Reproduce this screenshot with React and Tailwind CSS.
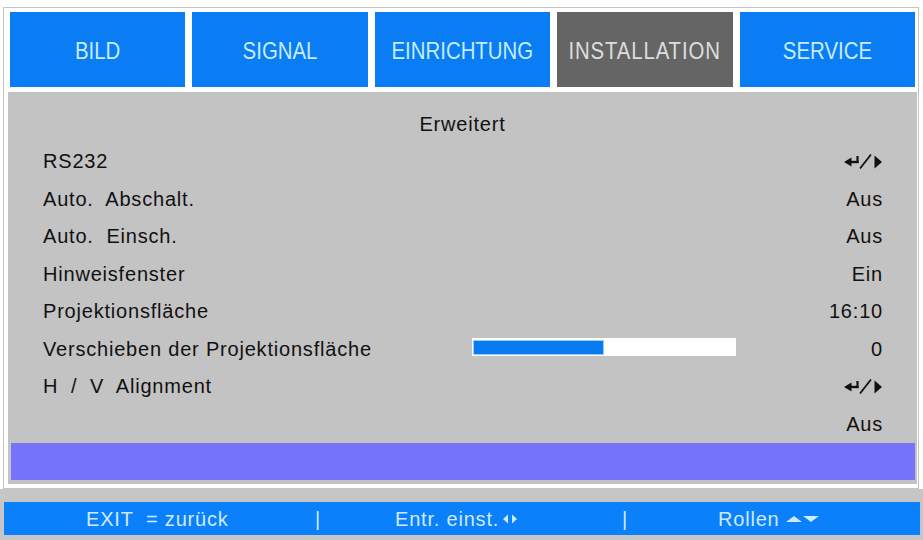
import React from "react";

const FONT = { fontFamily: '"Liberation Sans", Arial, sans-serif' };

function EnterIcon() {
  return (
    <svg width="39" height="16" viewBox="0 0 39 16" className="block">
      <polygon points="0,9 7.5,4.5 7.5,13.5" fill="#111" />
      <line x1="6" y1="9" x2="14.5" y2="9" stroke="#111" strokeWidth="2.4" />
      <line x1="13.5" y1="10" x2="13.5" y2="3" stroke="#111" strokeWidth="2.2" />
      <line x1="16" y1="15.5" x2="27" y2="1.5" stroke="#111" strokeWidth="1.8" />
      <polygon points="30.5,2.5 38,9 30.5,15.5" fill="#111" />
    </svg>
  );
}

const tabs = [
  { t: "BILD", cls: "" },
  { t: "SIGNAL", cls: "" },
  { t: "EINRICHTUNG", cls: "" },
  { t: "INSTALLATION", cls: "tracking-[1px]" },
  { t: "SERVICE", cls: "" },
];

const rows = [
  { label: "RS232", icon: true },
  { label: "Auto.  Abschalt.", value: "Aus" },
  { label: "Auto.  Einsch.", value: "Aus" },
  { label: "Hinweisfenster", value: "Ein" },
  { label: "Projektionsfläche", value: "16:10" },
  { label: "Verschieben der Projektionsfläche", slider: true, value: "0" },
  { label: "H  /  V  Alignment", icon: true },
  { label: "", value: "Aus" },
];

export default function App() {
  return (
    <div className="w-[923px] h-[540px] bg-white overflow-hidden flex flex-col" style={FONT}>
      {/* Frame */}
      <div className="ml-[3px] mt-[7px] w-[916px] h-[482px] border border-[#c4c4c4] bg-white flex flex-col">
        {/* Tabs */}
        <div className="grid grid-cols-5 gap-[7px] pl-[6px] pr-[3px] pt-[4px] h-[79px]">
          {tabs.map(({ t, cls }) => {
            const active = t === "INSTALLATION";
            return (
              <div
                key={t}
                className={
                  "h-[75px] flex items-center justify-center pt-[3px] text-[24px] " +
                  (active
                    ? "bg-[#656565] text-[#dedede]"
                    : "bg-[#0a7cf4] text-[#c6ecff]")
                }
              >
                <span className={"inline-block whitespace-nowrap scale-x-[0.85] " + cls}>{t}</span>
              </div>
            );
          })}
        </div>
        {/* Panel */}
        <div className="ml-[4px] mr-[1px] mt-[5px] h-[392px] bg-[#c3c3c3] flex flex-col pt-[13px] tracking-[0.8px]">
          <div className="h-[37.5px] flex items-center justify-center text-[20px] text-[#111]">
            Erweitert
          </div>
          {rows.map((r, i) => (
            <div
              key={i}
              className="h-[37.5px] flex items-center pl-[35px] pr-[34px] text-[20px] text-[#111] whitespace-pre"
            >
              <div className={r.slider ? "w-[429px]" : "flex-1"}>{r.label}</div>
              {r.slider && (
                <div className="w-[264px] h-[18px] bg-white flex items-center pl-[1px] mt-[-3px]">
                  <div className="w-[131px] h-[15px] bg-[#0a7bee] border border-[#8fd2ff]" />
                </div>
              )}
              <div className={"flex justify-end " + (r.slider ? "flex-1" : "")}>
                {r.icon ? <EnterIcon /> : r.value}
              </div>
            </div>
          ))}
          <div className="ml-[3px] mr-[2px] h-[37px] bg-[#7573fa]" />
        </div>
      </div>
      {/* Footer */}
      <div className="flex-1 bg-[#c6c6c6] pt-[13px]">
        <div className="ml-[4px] w-[916px] h-[33px] bg-[#0a80fb] flex items-center pl-[82px] text-[20px] text-[#cfeaff] whitespace-pre tracking-[0.8px]">
          <span className="w-[229px]">EXIT  = zurück</span>
          <span className="w-[80px]">|</span>
          <span className="w-[227px] flex items-center">
            Entr. einst.
            <svg width="16" height="12" viewBox="0 0 16 12" className="ml-[3px]">
              <polygon points="1,6 6,1.5 6,10.5" fill="#cfeaff" />
              <polygon points="10,1.5 15,6 10,10.5" fill="#cfeaff" />
            </svg>
          </span>
          <span className="w-[96px]">|</span>
          <span className="flex items-center">
            Rollen
            <svg width="34" height="10" viewBox="0 0 34 10" className="ml-[6px]">
              <polygon points="0,8 8,2 16,8" fill="#cfeaff" />
              <polygon points="17,2 33,2 25,8" fill="#cfeaff" />
            </svg>
          </span>
        </div>
      </div>
    </div>
  );
}
